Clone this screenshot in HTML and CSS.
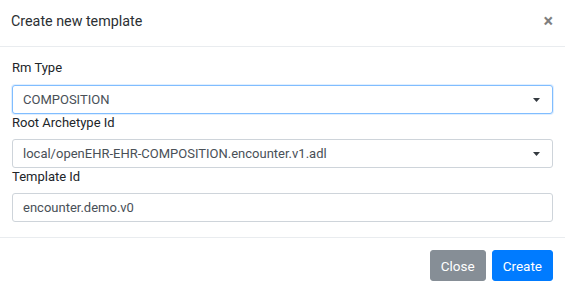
FILE: index.html
```html
<!DOCTYPE html>
<html>
  <head>
    <meta charset="utf-8" />
    <title>Create new template</title>
    <link rel="stylesheet" href="styles.css">
  </head>
  <body>
    <div class="modal-content">
      <div class="modal-header">
        <h5 class="modal-title">Create new template</h5>
        <button type="button" class="close">&times;</button>
      </div>

      <div class="modal-body">
        <label class="field-label">Rm Type</label>
        <div class="form-control select focused">
          <span>COMPOSITION</span>
          <svg class="caret" width="7" height="4" viewBox="0 0 7 4"><path d="M0 0h7L3.5 4z" fill="#343a40"/></svg>
        </div>

        <label class="field-label">Root Archetype Id</label>
        <div class="form-control select">
          <span>local/openEHR-EHR-COMPOSITION.encounter.v1.adl</span>
          <svg class="caret" width="7" height="4" viewBox="0 0 7 4"><path d="M0 0h7L3.5 4z" fill="#343a40"/></svg>
        </div>

        <label class="field-label">Template Id</label>
        <div class="form-control">
          <span>encounter.demo.v0</span>
        </div>
      </div>

      <div class="modal-footer">
        <button type="button" class="btn btn-secondary">Close</button>
        <button type="button" class="btn btn-primary">Create</button>
      </div>
    </div>
  </body>
</html>
```

FILE: styles.css
```css
html,
body {
  margin: 0;
  padding: 0;
  background: #ffffff;
}

body {
  font-family: Roboto, "Liberation Sans", sans-serif;
  font-size: 13px;
  line-height: 1.5;
  color: #212529;
}

.modal-content {
  width: 565px;
  height: 293px;
  display: flex;
  flex-direction: column;
  box-sizing: border-box;
}

.modal-header {
  display: flex;
  align-items: center;
  justify-content: space-between;
  height: 47px;
  padding: 0 12px 0 11px;
  border-bottom: 1px solid #e9ecef;
  box-sizing: border-box;
}

.modal-title {
  margin: 0;
  font-size: 14.3px;
  font-weight: 400;
  line-height: 22px;
  padding-bottom: 4px;
  color: #2b2f33;
}

.close {
  background: none;
  border: 0;
  padding: 0;
  margin-bottom: 4px;
  font-family: Roboto, "Liberation Sans", sans-serif;
  font-size: 18px;
  font-weight: 700;
  line-height: 1;
  color: #000000;
  opacity: 0.5;
  cursor: pointer;
}

.modal-body {
  flex: 1;
  padding: 12px 12px 0;
}

.field-label {
  display: block;
  line-height: 18px;
  margin-bottom: 7px;
}

.modal-body .field-label:first-child {
  margin-bottom: 8px;
}

.form-control {
  display: flex;
  align-items: center;
  height: 29px;
  padding: 0 9px 0 10px;
  border: 1px solid #ced4da;
  border-radius: 3px;
  color: #495057;
  background: #ffffff;
  box-sizing: border-box;
}

.form-control span {
  flex: 1;
  white-space: nowrap;
  overflow: hidden;
}

.form-control.focused {
  border-color: #80bdff;
  box-shadow: 0 0 0 1px rgba(0, 123, 255, 0.12);
}

.caret {
  flex: none;
  margin-right: 3px;
}

.modal-footer {
  display: flex;
  justify-content: flex-end;
  align-items: center;
  height: 56px;
  padding: 0 9px;
  border-top: 1px solid #e9ecef;
  box-sizing: border-box;
}

.btn {
  height: 31px;
  margin: 0 3px;
  padding: 0 10px;
  border: 1px solid transparent;
  border-radius: 3px;
  font-family: Roboto, "Liberation Sans", sans-serif;
  font-size: 13.5px;
  color: #ffffff;
  cursor: pointer;
}

.btn-secondary {
  background: #868e96;
  border-color: #868e96;
}

.btn-primary {
  background: #007bff;
  border-color: #007bff;
}
```
